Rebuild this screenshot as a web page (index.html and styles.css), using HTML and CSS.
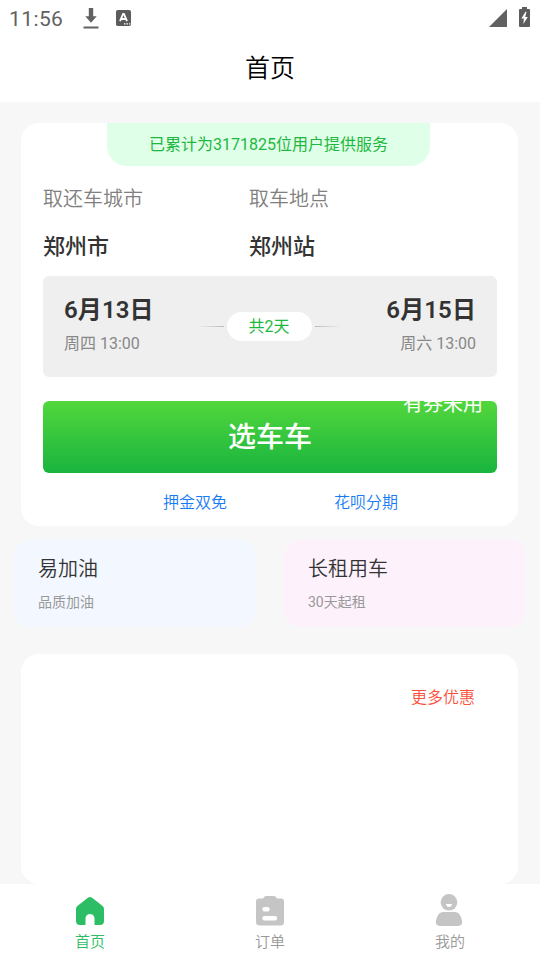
FILE: index.html
```html
<!DOCTYPE html>
<html lang="zh-CN">
<head>
<meta charset="utf-8">
<title>首页</title>
<link rel="stylesheet" href="styles.css">
</head>
<body>
<header class="header">
  <div class="status">
    <span class="clock">11:56</span>
    <svg class="download" width="16" height="22" viewBox="0 0 16 22"><path d="M5.800 0h4.400v8.200h3.500L8 14.800 2.300 8.200h3.500zM.5 18.500h15v2H.5z" fill="#626262"/></svg>
    <svg class="keyboard" width="15" height="16" viewBox="0 0 15 16"><rect width="15" height="16" rx="1.800" fill="#5c5c5c"/><path d="M4 11.200 7.100 4h.8L11 11.200M5.200 9h4.600" fill="none" stroke="#fff" stroke-width="1.800"/><path d="M8 13.200h1.500v1.300H8zm2.500 0H12v1.300h-1.500zm2.500 0h1.300v1.300H13z" fill="#fff"/></svg>
    <span class="spacer"></span>
    <svg class="signal" width="18" height="18" viewBox="0 0 18 18"><path d="M18 0v18H0z" fill="#616161"/></svg>
    <svg class="battery" width="11" height="20" viewBox="0 0 11 20"><path d="M3 0h5v2h2q1 0 1 1v16q0 1-1 1H1q-1 0-1-1V3q0-1 1-1h2z" fill="#5d5d5d"/><path d="M6.500 4.800 2.400 11.600h2.500L4.300 17l4.500-7.100H6.200l1.300-5.100z" fill="#fff"/></svg>
  </div>
  <h1 class="title">首页</h1>
</header>
<main class="content">
  <section class="card booking">
    <div class="banner">已累计为3171825位用户提供服务</div>
    <div class="places">
      <div><div class="label">取还车城市</div><div class="value">郑州市</div></div>
      <div><div class="label">取车地点</div><div class="value">郑州站</div></div>
    </div>
    <div class="dates">
      <div class="date"><div class="day">6月13日</div><div class="time">周四 13:00</div></div>
      <div class="duration"><i class="line"></i><span class="pill">共2天</span><i class="line right"></i></div>
      <div class="date end"><div class="day">6月15日</div><div class="time">周六 13:00</div></div>
    </div>
    <div class="choose">选车车<span class="coupon">有券未用</span></div>
    <div class="links"><a>押金双免</a><a>花呗分期</a></div>
  </section>
  <section class="services">
    <div class="service blue"><div class="name">易加油</div><div class="desc">品质加油</div></div>
    <div class="service pink"><div class="name">长租用车</div><div class="desc">30天起租</div></div>
  </section>
  <section class="card offers"><a class="more">更多优惠</a></section>
</main>
<nav class="tabs">
  <div class="tab active">
    <svg width="32" height="34" viewBox="0 0 32 34"><path d="M14.200 3.600Q16 2.200 17.800 3.600L28.600 12Q30 13.200 30 15v12q0 4-4 4h-5.500v-6.500a4.500 4.500 0 0 0-9 0V31H6q-4 0-4-4V15q0-1.800 1.400-3z" fill="#2dbd65"/></svg>
    <span>首页</span>
  </div>
  <div class="tab">
    <svg width="32" height="34" viewBox="0 0 32 34"><path d="M5 4.500H9q1-2.500 3-2.500h8q2 0 3 2.500h4q3 0 3 3V28q0 3.500-3.500 3.500h-21Q2 31.500 2 28V7.500q0-3 3-3z" fill="#c5c5c5"/><path d="M10.500 15.300h3M10.500 24.200h10.500" stroke="#fff" stroke-width="4.400" stroke-linecap="round"/></svg>
    <span>订单</span>
  </div>
  <div class="tab">
    <svg width="32" height="34" viewBox="0 0 32 34"><circle cx="15" cy="8.300" r="8.300" fill="#c5c5c5"/><path d="M12 10h6q-.4 3-3 3t-3-3z" fill="#fff"/><path d="M9 18h12q4.500 0 6.300 6 1.700 5 .2 6.500-1.500 1.500-4.500 1.500H7q-3 0-4.500-1.500Q1 29 2.700 24 4.500 18 9 18z" fill="#c5c5c5"/></svg>
    <span>我的</span>
  </div>
</nav>
</body>
</html>
```
FILE: styles.css
```css
* { box-sizing: border-box; }
body {
  margin: 0;
  width: 540px;
  height: 960px;
  overflow: hidden;
  display: flex;
  flex-direction: column;
  background: #f7f7f7;
  color: #333;
  font-family: Roboto, "Noto Sans CJK SC", sans-serif;
}
svg { display: block; flex: none; }
.header { height: 102px; background: #fff; flex: none; }
.status { height: 36px; padding: 0 10px 0 9px; display: flex; align-items: center; }
.clock { width: 74px; font-size: 21px; letter-spacing: .4px; color: #626262; line-height: 36px; padding-top: 2px; }
.download { margin-top: 1px; }
.keyboard { margin-left: 17px; }
.spacer { flex: 1; }
.signal { margin-right: 12px; }
.battery { margin-bottom: 2px; }
.title { margin: 0; height: 66px; line-height: 66px; text-align: center; font-size: 25px; font-weight: 350; color: #000; }
.content { flex: 1; padding: 21px 14px 0; }
.card { width: 497px; margin-left: 7px; background: #fff; border-radius: 18px; }
.booking { height: 403px; padding: 0 21px 0 22px; }
.banner { width: 323px; height: 43px; margin-left: 64px; line-height: 43px; border-radius: 0 0 20px 20px; background: #e0ffe8; color: #1eb840; font-size: 16px; text-align: center; }
.places { height: 110px; display: grid; grid-template-columns: 206px 1fr; padding-top: 18px; }
.label { height: 30px; line-height: 30px; font-size: 20px; font-weight: 350; color: #808080; }
.value { height: 30px; margin-top: 18px; line-height: 30px; font-size: 22px; font-weight: 500; color: #333; }
.dates { height: 101px; padding: 0 21px; display: flex; justify-content: space-between; border-radius: 6px; background: #efefef; }
.date { width: 110px; padding-top: 17px; }
.end { text-align: right; }
.day { height: 34px; line-height: 34px; font-size: 24px; font-weight: 600; letter-spacing: .1px; white-space: nowrap; }
.time { height: 34px; line-height: 34px; font-size: 16px; color: #888; }
.duration { display: flex; align-items: center; gap: 3px; margin-left: -2px; }
.line { width: 26px; height: 1px; background: linear-gradient(90deg, #efefef, #bbb); }
.line.right { background: linear-gradient(270deg, #efefef, #bbb); }
.pill { width: 85px; height: 29px; line-height: 29px; border-radius: 15px; background: #fff; color: #1eb840; font-size: 16px; text-align: center; }
.choose { position: relative; overflow: hidden; height: 72px; margin-top: 24px; line-height: 73px; border-radius: 6px; background: linear-gradient(#52d73c, #19b43f); color: #fff; font-size: 28px; font-weight: 500; text-align: center; }
.coupon { position: absolute; right: 14px; top: -11px; line-height: 28px; font-size: 20px; font-weight: 400; }
.links { display: flex; gap: 107px; padding: 15px 0 0 120px; line-height: 30px; font-size: 16px; font-weight: 350; color: #187cf5; }
.services { display: flex; justify-content: space-between; padding-top: 14px; }
.service { width: 242px; height: 87px; padding: 14px 24px 12px; border-radius: 16px; }
.blue { background: #f3f7ff; }
.pink { background: #fdf1fc; }
.name { height: 30px; line-height: 30px; font-size: 20px; font-weight: 350; }
.desc { height: 24px; margin-top: 6px; line-height: 24px; font-size: 14px; color: #999; }
.offers { height: 230px; margin-top: 27px; padding: 29px 43px; text-align: right; }
.more { line-height: 30px; font-size: 16px; font-weight: 350; color: #fa513c; }
.tabs { flex: none; height: 76px; display: grid; grid-template-columns: repeat(3, 1fr); background: #fff; }
.tab { display: flex; flex-direction: column; align-items: center; padding-top: 10px; font-size: 15px; font-weight: 350; line-height: 24px; color: #999; }
.tab span { margin-top: 2px; }
.active { color: #2dbd65; }
```
